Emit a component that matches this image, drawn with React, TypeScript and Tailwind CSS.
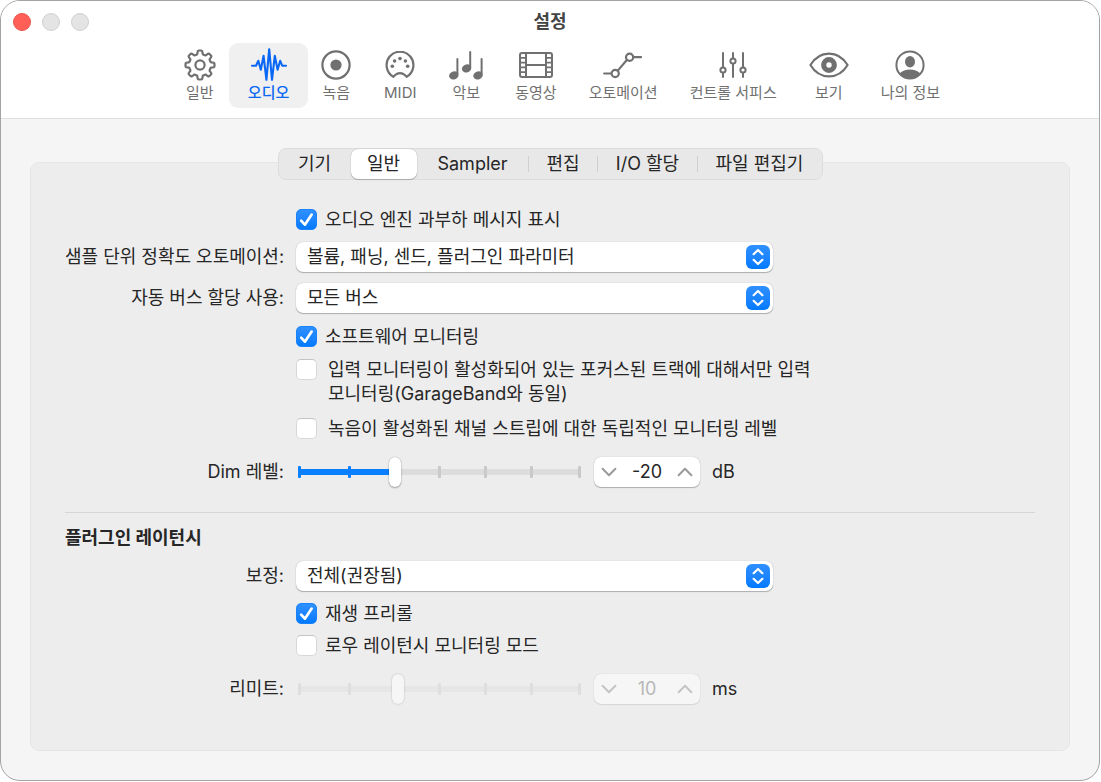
import { ReactNode, useState } from "react";
import clsx from "clsx";

/* ---------- toolbar icons ---------- */

// eight soft teeth, traced as a polar curve
const gearPath =
  Array.from({ length: 160 }, (_, i) => {
    const a = (i / 160) * Math.PI * 2;
    const r = 12.7 + 1.8 * Math.tanh(3 * Math.cos(8 * a));
    return `${i ? "L" : "M"}${(16 + r * Math.sin(a)).toFixed(2)} ${(16 - r * Math.cos(a)).toFixed(2)}`;
  }).join("") + "Z";

type IconProps = { w: number; h: number; stroke?: number; children: ReactNode };

function Icon({ w, h, stroke = 2, children }: IconProps) {
  return (
    <svg
      width={w}
      height={h}
      viewBox={`0 0 ${w} ${h}`}
      fill="none"
      stroke="currentColor"
      strokeWidth={stroke}
      strokeLinecap="round"
      strokeLinejoin="round"
      aria-hidden="true"
    >
      {children}
    </svg>
  );
}

const GearIcon = () => (
  <Icon w={32} h={32} stroke={2.2}>
    <path d={gearPath} />
    <circle cx="16" cy="16" r="4.6" />
  </Icon>
);

const WaveIcon = () => (
  <Icon w={36} h={33} stroke={2.1}>
    <path d="M1 17.7H5L7.3 12.8L9.8 21.8L12.6 7.8L15.4 31.8L18.2 1.2L21 31.8L23.8 7.8L26.6 21.8L29.2 12.8L31.2 17.7H35" />
  </Icon>
);

const RecordIcon = () => (
  <Icon w={30} h={30} stroke={2.2}>
    <circle cx="15" cy="15" r="13.6" />
    <circle cx="15" cy="15" r="5.6" fill="currentColor" stroke="none" />
  </Icon>
);

const MidiIcon = () => (
  <Icon w={34} h={28} stroke={2.2}>
    <path d="M10.4 25.8A13.4 13.4 0 1 1 23.6 25.8L21.8 24A7 7 0 0 0 12.2 24Z" />
    <g fill="currentColor" stroke="none">
      <circle cx="9.3" cy="15.2" r="1.8" />
      <circle cx="11.6" cy="10" r="1.8" />
      <circle cx="17" cy="7.6" r="1.8" />
      <circle cx="22.4" cy="10" r="1.8" />
      <circle cx="24.7" cy="15.2" r="1.8" />
    </g>
  </Icon>
);

const NotesIcon = () => (
  <Icon w={34} h={30}>
    <path d="M8.4 9V24M21.2 2V17M32.6 9V24" />
    <g fill="currentColor" stroke="none">
      <ellipse cx="4.8" cy="25.4" rx="4.8" ry="4" transform="rotate(-20 4.8 25.4)" />
      <ellipse cx="17.6" cy="18.4" rx="4.8" ry="4" transform="rotate(-20 17.6 18.4)" />
      <ellipse cx="29" cy="25.4" rx="4.8" ry="4" transform="rotate(-20 29 25.4)" />
    </g>
  </Icon>
);

const FilmIcon = () => (
  <Icon w={34} h={28}>
    <rect x="1" y="2" width="32" height="24" rx="2" />
    <path d="M7 2V26M27 2V26M7 14H27" />
    <path
      d="M1 6.8H7M1 11.6H7M1 16.4H7M1 21.2H7M27 6.8H33M27 11.6H33M27 16.4H33M27 21.2H33"
      strokeLinecap="butt"
      strokeWidth="1.8"
    />
  </Icon>
);

const AutomationIcon = () => (
  <Icon w={40} h={28} stroke={2.2}>
    <path d="M1.2 22.5H8M14.8 19.6L23.8 9M30.4 6.2H38" />
    <circle cx="12.2" cy="22.5" r="3.6" />
    <circle cx="26.6" cy="6.2" r="3.6" />
  </Icon>
);

const FadersIcon = () => (
  <Icon w={28} h={26}>
    <path d="M4 1V15M4 21V25M14 1V6M14 12V25M24 1V15M24 21V25" />
    <circle cx="4" cy="18" r="2.6" />
    <circle cx="14" cy="9" r="2.6" />
    <circle cx="24" cy="18" r="2.6" />
  </Icon>
);

const EyeIcon = () => (
  <Icon w={40} h={28} stroke={2.2}>
    <path d="M1.4 14C6 6.4 12.4 2.6 20 2.6S34 6.4 38.6 14C34 21.6 27.6 25.4 20 25.4S6 21.6 1.4 14Z" />
    <circle cx="20" cy="14" r="5.3" strokeWidth="5.2" />
  </Icon>
);

const ProfileIcon = () => (
  <Icon w={30} h={30}>
    <circle cx="15" cy="15" r="13.6" />
    <g fill="currentColor" stroke="none">
      <ellipse cx="15" cy="11.8" rx="5" ry="5.7" />
      <path d="M4.6 23.4C7.2 20.6 10.8 19.4 15 19.4S22.8 20.6 25.4 23.4A13.6 13.6 0 0 1 4.6 23.4Z" />
    </g>
  </Icon>
);

const toolbar = [
  { id: "general", label: "일반", icon: <GearIcon /> },
  { id: "audio", label: "오디오", icon: <WaveIcon /> },
  { id: "recording", label: "녹음", icon: <RecordIcon /> },
  { id: "midi", label: "MIDI", icon: <MidiIcon /> },
  { id: "score", label: "악보", icon: <NotesIcon /> },
  { id: "movie", label: "동영상", icon: <FilmIcon /> },
  { id: "automation", label: "오토메이션", icon: <AutomationIcon /> },
  { id: "surfaces", label: "컨트롤 서피스", icon: <FadersIcon /> },
  { id: "view", label: "보기", icon: <EyeIcon /> },
  { id: "profile", label: "나의 정보", icon: <ProfileIcon /> },
];

const tabs = [
  { label: "기기", width: "w-[72px]" },
  { label: "일반", width: "w-[66px]" },
  { label: "Sampler", width: "w-[112px]" },
  { label: "편집", width: "w-[69px]" },
  { label: "I/O 할당", width: "w-[100px]" },
  { label: "파일 편집기", width: "w-[124px]" },
];

/* ---------- controls ---------- */

function Row({ label, htmlFor, className, children }: { label?: string; htmlFor?: string; className?: string; children: ReactNode }) {
  return (
    <div className={clsx("grid grid-cols-[219px_minmax(0,1fr)] items-center gap-x-3", className)}>
      {label ? (
        <label htmlFor={htmlFor} className="whitespace-nowrap text-right">
          {label}
        </label>
      ) : (
        <span />
      )}
      {children}
    </div>
  );
}

function Checkbox({ label, defaultChecked, wide }: { label: string; defaultChecked?: boolean; wide?: boolean }) {
  return (
    <label className={clsx("flex items-start", wide ? "gap-[11px]" : "gap-2")}>
      <span className="relative mt-px h-[21px] w-[21px] shrink-0">
        <input
          type="checkbox"
          defaultChecked={defaultChecked}
          className="peer block h-[21px] w-[21px] appearance-none rounded-[5px] border border-[#d8d8d8] border-t-[#c4c4c4] bg-white checked:border-[#1a83fb] checked:bg-linear-to-b checked:from-[#2f90ff] checked:to-[#007aff]"
        />
        <svg
          viewBox="0 0 22 22"
          className="pointer-events-none absolute inset-0 hidden peer-checked:block"
          fill="none"
          stroke="#fff"
          strokeWidth="2.8"
          strokeLinecap="round"
          strokeLinejoin="round"
          aria-hidden="true"
        >
          <path d="M5.4 12.2L9.3 16.4L16.4 5.8" />
        </svg>
      </span>
      <span className="max-w-[490px] break-keep">{label}</span>
    </label>
  );
}

function Select({ id, options }: { id: string; options: string[] }) {
  return (
    <div className="relative w-full max-w-[477px]">
      <select
        id={id}
        className="block h-[30px] w-full appearance-none rounded-[7px] bg-white pl-[11px] pr-8 shadow-[0_0_1px_rgba(0,0,0,0.3),0_1px_1px_rgba(0,0,0,0.25)] outline-none"
      >
        {options.map((o) => (
          <option key={o}>{o}</option>
        ))}
      </select>
      <span className="pointer-events-none absolute right-[3px] top-[3px] h-6 w-6 rounded-[6px] bg-linear-to-b from-[#2f90ff] to-[#007aff]">
        <svg
          viewBox="0 0 24 24"
          fill="none"
          stroke="#fff"
          strokeWidth="2.2"
          strokeLinecap="round"
          strokeLinejoin="round"
          aria-hidden="true"
        >
          <path d="M7.6 9.2L12 5L16.4 9.2M7.6 14.8L12 19L16.4 14.8" />
        </svg>
      </span>
    </div>
  );
}

// percent of the track
const ticks = [1, 18.5, 34, 50, 66, 82, 99];

function Slider({ id, value, onChange, disabled }: { id: string; value: number; onChange: (v: number) => void; disabled?: boolean }) {
  return (
    <div className="relative h-[30px] w-[286px] shrink-0">
      <div className={clsx("absolute inset-x-[2px] top-3 h-[6px]", disabled ? "bg-[#e6e6e6]" : "bg-[#dcdcdc]")}>
        {!disabled && <div className="h-full bg-[#0a7fff]" style={{ width: `${value}%` }} />}
      </div>
      {ticks.map((t) => (
        <span
          key={t}
          className={clsx(
            "absolute top-[9px] -ml-px h-3 w-[3px] rounded-[1px]",
            disabled ? "bg-[#dedede]" : t < value ? "bg-[#0a7fff]" : "bg-[#c9c9c9]"
          )}
          style={{ left: `${t}%` }}
        />
      ))}
      <input
        id={id}
        type="range"
        min={0}
        max={100}
        value={value}
        disabled={disabled}
        onChange={(e) => onChange(Number(e.target.value))}
        className={clsx(
          "relative block h-[30px] w-full appearance-none bg-transparent [&::-webkit-slider-thumb]:h-[30px] [&::-webkit-slider-thumb]:w-[12px] [&::-webkit-slider-thumb]:appearance-none [&::-webkit-slider-thumb]:rounded-[6px]",
          disabled
            ? "[&::-webkit-slider-thumb]:bg-[#f6f6f6] [&::-webkit-slider-thumb]:shadow-[0_0_2px_rgba(0,0,0,0.25)]"
            : "[&::-webkit-slider-thumb]:bg-white [&::-webkit-slider-thumb]:shadow-[0_0_1px_rgba(0,0,0,0.35),0_1px_2px_rgba(0,0,0,0.3)]"
        )}
      />
    </div>
  );
}

function Chevron({ up }: { up?: boolean }) {
  return (
    <svg
      width="16"
      height="10"
      viewBox="0 0 16 10"
      fill="none"
      stroke="currentColor"
      strokeWidth="2"
      strokeLinecap="round"
      strokeLinejoin="round"
      aria-hidden="true"
    >
      <path d={up ? "M1.6 8.2L8 1.8L14.4 8.2" : "M1.6 1.8L8 8.2L14.4 1.8"} />
    </svg>
  );
}

function Stepper({ name, value, onChange, disabled }: { name: string; value: number; onChange: (v: number) => void; disabled?: boolean }) {
  return (
    <div
      className={clsx(
        "flex h-[30px] w-[106px] shrink-0 items-center rounded-[7px]",
        disabled
          ? "bg-[#f6f6f6] text-[#c4c4c4] shadow-[0_0_1px_rgba(0,0,0,0.2),0_1px_1px_rgba(0,0,0,0.08)]"
          : "bg-white text-[#9a9a9a] shadow-[0_0_1px_rgba(0,0,0,0.3),0_1px_1px_rgba(0,0,0,0.25)]"
      )}
    >
      <button
        type="button"
        aria-label={`${name} 감소`}
        disabled={disabled}
        onClick={() => onChange(value - 1)}
        className="flex h-full w-[30px] shrink-0 items-center justify-center"
      >
        <Chevron />
      </button>
      <input
        type="text"
        aria-label={name}
        value={value}
        disabled={disabled}
        onChange={(e) => onChange(Number(e.target.value) || 0)}
        className={clsx("min-w-0 flex-1 bg-transparent text-center outline-none", disabled ? "text-[#b8b8b8]" : "text-[#262626]")}
      />
      <button
        type="button"
        aria-label={`${name} 증가`}
        disabled={disabled}
        onClick={() => onChange(value + 1)}
        className="flex h-full w-[30px] shrink-0 items-center justify-center"
      >
        <Chevron up />
      </button>
    </div>
  );
}

/* ---------- window ---------- */

export default function App() {
  const [section, setSection] = useState("audio");
  const [tab, setTab] = useState("일반");
  const [dimPos, setDimPos] = useState(34);
  const [dim, setDim] = useState(-20);
  const [limitPos, setLimitPos] = useState(35);
  const [limit, setLimit] = useState(10);

  return (
    <div className="flex min-h-screen bg-white pb-px pr-px font-['Inter','Noto_Sans_CJK_KR',sans-serif] text-lg leading-6 text-[#262626]">
      <div className="flex flex-1 flex-col overflow-hidden rounded-[20px] border border-[#a3a3a3] bg-[#f5f5f5]">
        <header className="border-b border-[#dfdfdf] bg-white pb-[10px]">
          <div className="grid h-[42px] grid-cols-[1fr_auto_1fr] items-center px-3">
            <div className="flex gap-[11px]">
              <button type="button" aria-label="닫기" className="h-[18px] w-[18px] rounded-full border border-[#e9544c] bg-[#ff5f57]" />
              <button type="button" aria-label="최소화" className="h-[18px] w-[18px] rounded-full border border-[#d0d0d0] bg-[#e4e4e4]" />
              <button type="button" aria-label="확대" className="h-[18px] w-[18px] rounded-full border border-[#d0d0d0] bg-[#e4e4e4]" />
            </div>
            <h1 className="font-bold text-[#444]">설정</h1>
          </div>
          <nav className="flex justify-center pl-6">
            {toolbar.map((item) => (
              <button
                key={item.id}
                type="button"
                onClick={() => setSection(item.id)}
                className={clsx(
                  "flex h-[65px] flex-col items-center rounded-[9px] pt-[5px] text-[15px] leading-6",
                  item.id === section ? "-mx-[3px] bg-[#f0f0f0] px-[19px] font-medium text-[#0a68f5]" : "px-4 text-[#707070]"
                )}
              >
                <span className="flex h-[33px] items-center">{item.icon}</span>
                <span className="whitespace-nowrap">{item.label}</span>
              </button>
            ))}
          </nav>
        </header>

        <main className="flex flex-1 flex-col p-[29px]">
          <div role="tablist" className="relative z-10 flex h-8 self-center rounded-lg border border-[#dcdcdc] bg-[#e8e8e8]">
            {tabs.map((t, i) => (
              <button
                key={t.label}
                type="button"
                role="tab"
                aria-selected={t.label === tab}
                onClick={() => setTab(t.label)}
                className={clsx(
                  "relative flex items-center justify-center rounded-[7px]",
                  t.width,
                  t.label === tab && "bg-white shadow-[0_0_1px_rgba(0,0,0,0.35),0_1px_1px_rgba(0,0,0,0.2)]"
                )}
              >
                {t.label}
                {i > 1 && i < tabs.length - 1 && <span className="absolute right-0 top-[7px] h-4 w-px bg-[#cfcfcf]" />}
              </button>
            ))}
          </div>

          <form className="-mt-[18px] flex-1 rounded-[9px] border border-[#e5e5e5] bg-[#ededed] px-[34px] pb-[44px] pt-[41px]">
            <Row className="h-8">
              <Checkbox label="오디오 엔진 과부하 메시지 표시" defaultChecked />
            </Row>
            <Row label="샘플 단위 정확도 오토메이션:" htmlFor="sample-accurate" className="mt-[6px]">
              <Select id="sample-accurate" options={["볼륨, 패닝, 센드, 플러그인 파라미터", "볼륨, 패닝, 센드", "끔"]} />
            </Row>
            <Row label="자동 버스 할당 사용:" htmlFor="auto-bus" className="mt-[11px]">
              <Select id="auto-bus" options={["모든 버스", "버스 1-32"]} />
            </Row>
            <Row className="mt-3">
              <Checkbox label="소프트웨어 모니터링" defaultChecked />
            </Row>
            <Row className="mt-[9px]">
              <Checkbox wide label="입력 모니터링이 활성화되어 있는 포커스된 트랙에 대해서만 입력 모니터링(GarageBand와 동일)" />
            </Row>
            <Row className="mt-[11px]">
              <Checkbox wide label="녹음이 활성화된 채널 스트립에 대한 독립적인 모니터링 레벨" />
            </Row>
            <Row label="Dim 레벨:" htmlFor="dim-level" className="mt-4">
              <div className="flex items-center gap-3">
                <Slider id="dim-level" value={dimPos} onChange={setDimPos} />
                <Stepper name="Dim 레벨" value={dim} onChange={setDim} />
                <span>dB</span>
              </div>
            </Row>

            <hr className="mt-[25px] border-[#d6d6d6]" />

            <h2 className="mt-[13px] font-bold">플러그인 레이턴시</h2>
            <Row label="보정:" htmlFor="compensation" className="mt-[11px]">
              <Select id="compensation" options={["전체(권장됨)", "오디오 및 소프트웨어 악기 트랙", "끔"]} />
            </Row>
            <Row className="mt-[11px]">
              <Checkbox label="재생 프리롤" defaultChecked />
            </Row>
            <Row className="mt-2">
              <Checkbox label="로우 레이턴시 모니터링 모드" />
            </Row>
            <Row label="리미트:" htmlFor="limit" className="mt-4">
              <div className="flex items-center gap-3">
                <Slider id="limit" value={limitPos} onChange={setLimitPos} disabled />
                <Stepper name="리미트" value={limit} onChange={setLimit} disabled />
                <span>ms</span>
              </div>
            </Row>
          </form>
        </main>
      </div>
    </div>
  );
}
